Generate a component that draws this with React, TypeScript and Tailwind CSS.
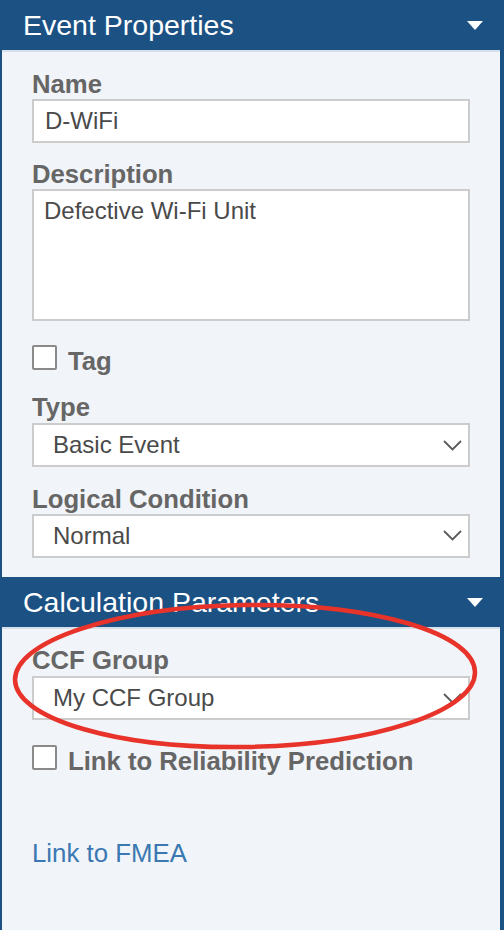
import React from "react";

const font = { fontFamily: '"Liberation Sans", Arial, Helvetica, sans-serif' };

function Caret() {
  return (
    <svg width="16" height="9" viewBox="0 0 16 9" className="shrink-0">
      <path d="M0 0 L16 0 L8 9 Z" fill="#ffffff" />
    </svg>
  );
}

function Chevron() {
  return (
    <svg width="19" height="11" viewBox="0 0 19 11" className="shrink-0">
      <path d="M1 1 L9.5 9.5 L18 1" fill="none" stroke="#5a5a5a" strokeWidth="1.8" />
    </svg>
  );
}

function Header({ title }: { title: string }) {
  return (
    <div className="flex h-[50px] items-center justify-between bg-[#1c5184] pl-[23px] pr-[21px]">
      <span className="text-[28.5px] leading-none text-white">{title}</span>
      <Caret />
    </div>
  );
}

function Label({ children, className = "" }: { children: React.ReactNode; className?: string }) {
  return (
    <div className={"pt-[3px] text-[25.7px] font-bold leading-[30px] text-[#666666] " + className}>
      {children}
    </div>
  );
}

function Select({ value, className = "" }: { value: string; className?: string }) {
  return (
    <div
      className={
        "flex h-[44px] items-center justify-between border-2 border-[#cccccc] bg-white pl-[19px] pr-[6px] " +
        className
      }
    >
      <span className="text-[24px] leading-[28px] text-[#4a4a4a]">{value}</span>
      <Chevron />
    </div>
  );
}

function Checkbox({ label, className = "" }: { label: string; className?: string }) {
  return (
    <div className={"flex items-start gap-[11px] " + className}>
      <div className="mt-[2.5px] h-[25px] w-[25px] rounded-[2px] border-2 border-[#8a8a8a] bg-white" />
      <span className="pt-[3px] text-[25.7px] font-bold leading-[30px] text-[#666666]">{label}</span>
    </div>
  );
}

export default function App() {
  return (
    <div className="relative h-[930px] w-[504px] overflow-hidden bg-[#1c5184]" style={font}>
      <Header title="Event Properties" />
      <div className="mr-[4px] ml-[2px] border-t-2 border-[#d6e0ea] bg-[#f1f4f8] px-[30px] pt-[14px] pb-[19.5px]">
        <Label>Name</Label>
        <div className="flex h-[44px] items-center border-2 border-[#cccccc] bg-white px-[11px]">
          <span className="text-[24px] leading-[28px] text-[#4a4a4a]">D-WiFi</span>
        </div>

        <Label className="mt-[12.5px]">Description</Label>
        <div className="mt-[0.5px] h-[132px] border-2 border-[#cccccc] bg-white px-[10px] pt-[6px]">
          <span className="text-[24px] leading-[28px] text-[#4a4a4a]">Defective Wi-Fi Unit</span>
        </div>

        <Checkbox label="Tag" className="mt-[21.5px]" />

        <Label className="mt-[13px]">Type</Label>
        <Select value="Basic Event" className="mt-[1.5px]" />

        <Label className="mt-[13.5px]">Logical Condition</Label>
        <Select value="Normal" />
      </div>

      <Header title="Calculation Parameters" />
      <div className="mr-[4px] ml-[2px] h-[303px] border-t-2 border-[#d6e0ea] bg-[#f1f4f8] px-[30px] pt-[12.5px]">
        <Label>CCF Group</Label>
        <Select value="My CCF Group" className="mt-[1.5px]" />

        <Checkbox label="Link to Reliability Prediction" className="mt-[22.5px]" />

        <div className="mt-[62px] text-[25.8px] leading-[30px] text-[#3a78b2]">Link to FMEA</div>
      </div>

      <svg
        className="pointer-events-none absolute left-0 top-0"
        width="504"
        height="930"
        viewBox="0 0 504 930"
      >
        <ellipse
          cx="245"
          cy="676"
          rx="230"
          ry="71"
          fill="none"
          stroke="#e8332a"
          strokeWidth="4.5"
          transform="rotate(-1 245 676)"
        />
      </svg>
    </div>
  );
}
